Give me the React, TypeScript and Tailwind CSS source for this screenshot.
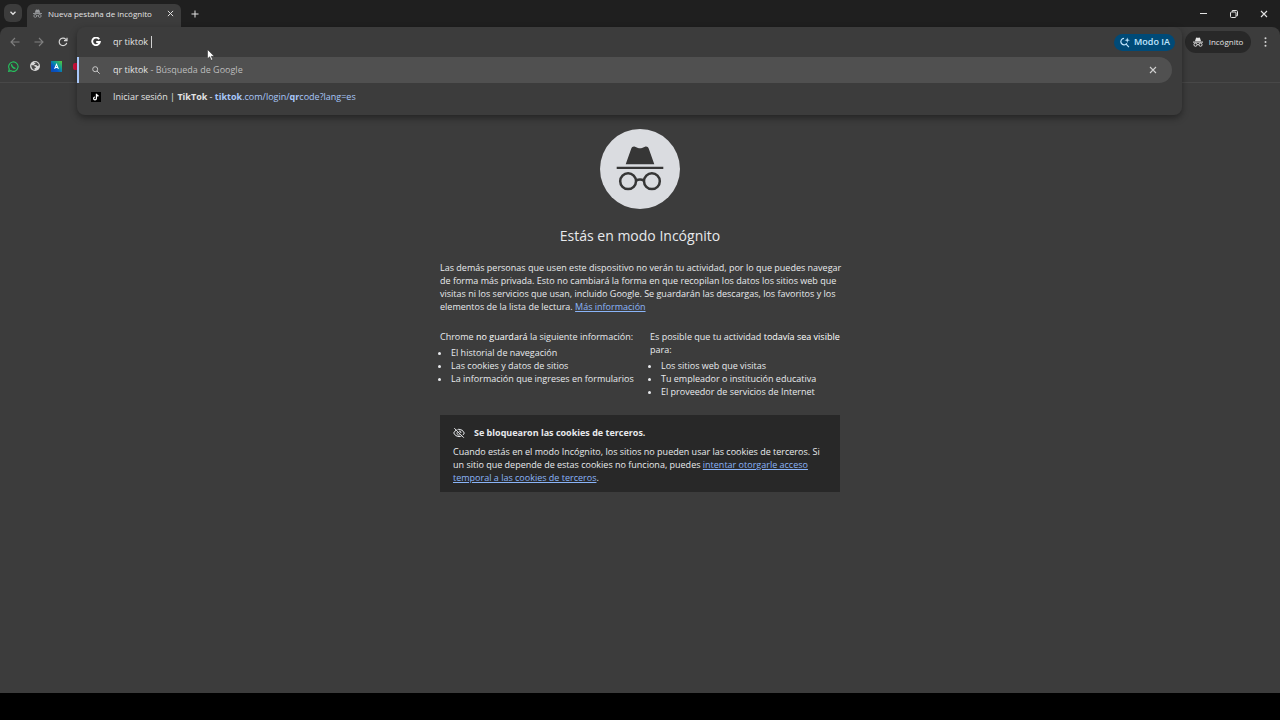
import type { ReactNode } from "react";

function IncognitoGlyph({ className }: { className: string }) {
  return (
    <svg viewBox="0 0 48 46" className={className} fill="none" aria-hidden="true">
      <path
        d="M9.3 19 14.4 4.2C15 2 17 1 19 1.8L22 3q2 .8 4 0l3-1.2C31 1 33 2 33.6 4.2L38.7 19Z"
        fill="currentColor"
      />
      <path d="M0 21h48v5H0z" fill="currentColor" />
      <circle cx="12" cy="36" r="7.5" stroke="currentColor" strokeWidth="4.5" />
      <circle cx="36" cy="36" r="7.5" stroke="currentColor" strokeWidth="4.5" />
      <path d="M20 35.5q4-2.5 8 0" stroke="currentColor" strokeWidth="4" />
    </svg>
  );
}

function HeroGlyph() {
  return (
    <svg viewBox="0 0 80 80" className="size-20" fill="none" aria-hidden="true">
      <circle cx="40" cy="40" r="40" fill="#dadce0" />
      <g fill="#363636">
        <path d="M25.7 35.3 31.2 19.8C31.9 17.9 33.3 17.2 35 17.8L38 18.9q2 .7 4 0l3-1.1c1.7-.6 3.1.1 3.8 2L54.3 35.3Z" />
        <path d="M16.7 37.8h46.6v2.3H16.7z" />
      </g>
      <g stroke="#363636" strokeWidth="2.5">
        <circle cx="28.1" cy="52.2" r="7.9" />
        <circle cx="51.9" cy="52.2" r="7.9" />
        <path d="M36 51.6q4-2.4 8 0" />
      </g>
    </svg>
  );
}

function Cross({ className }: { className: string }) {
  return (
    <svg viewBox="0 0 8 8" className={className} stroke="currentColor" strokeWidth="1.1" aria-hidden="true">
      <path d="m1 1 6 6M7 1 1 7" />
    </svg>
  );
}

function ArrowLeft({ className = "" }: { className?: string }) {
  return (
    <svg viewBox="0 0 10 10" className={`size-[10px] ${className}`} fill="none" stroke="currentColor" strokeWidth="1.1" aria-hidden="true">
      <path d="M9.5 5H1.2M5 1 1 5l4 4" />
    </svg>
  );
}

function Link({ children }: { children: ReactNode }) {
  return (
    <a href="#" className="text-[#8ab4f8] underline">
      {children}
    </a>
  );
}

function TabStrip() {
  return (
    <header className="flex h-[27px] shrink-0 items-stretch bg-[#1f1f1f]">
      <button aria-label="Buscar pestañas" className="mt-1 ml-1 flex size-[18px] items-center justify-center rounded-md bg-[#3c3c3c] text-[#e3e3e3]">
        <svg viewBox="0 0 8 8" className="size-2" fill="none" stroke="currentColor" strokeWidth="1.3" aria-hidden="true">
          <path d="m1.5 2.8 2.5 2.5 2.5-2.5" />
        </svg>
      </button>
      <div className="mt-1 ml-[5px] flex w-[154px] items-center rounded-t-md bg-[#3c3c3c] pr-[7px] pb-1 pl-1.5 text-[#e3e3e3]">
        <IncognitoGlyph className="size-[9px] shrink-0 text-[#9a9c9f]" />
        <span className="ml-1.5 flex-1 text-[8px] whitespace-nowrap">Nueva pestaña de incógnito</span>
        <button aria-label="Cerrar pestaña">
          <Cross className="size-[7px]" />
        </button>
      </div>
      <button aria-label="Nueva pestaña" className="ml-2.5 text-[#e3e3e3]">
        <svg viewBox="0 0 8 8" className="size-2" stroke="currentColor" aria-hidden="true">
          <path d="M4 .5v7M.5 4h7" />
        </svg>
      </button>
      <div className="ml-auto flex items-center gap-[22px] pr-3 text-[#e3e3e3]">
        <button aria-label="Minimizar">
          <svg viewBox="0 0 8 8" className="size-2" stroke="currentColor" aria-hidden="true">
            <path d="M0 3.5h7" />
          </svg>
        </button>
        <button aria-label="Restaurar">
          <svg viewBox="0 0 8 8" className="size-2" fill="none" stroke="currentColor" aria-hidden="true">
            <rect x=".5" y="2" width="5.5" height="5.5" rx="1" />
            <path d="M2.3 1.8V.5h4q1.2 0 1.2 1.2v4H6.3" />
          </svg>
        </button>
        <button aria-label="Cerrar">
          <Cross className="size-2" />
        </button>
      </div>
    </header>
  );
}

function Omnibox() {
  return (
    <div className="relative z-10 flex-1">
      <div className="absolute inset-x-0 top-0 rounded-lg bg-[#3c3c3c] pb-[5px] shadow-[0_3px_7px_rgba(0,0,0,0.4)]">
        <div className="flex h-[30px] items-center pr-[7px] pl-[14px]">
          <svg viewBox="0 0 10 10" className="size-[10px]" fill="none" stroke="#fff" strokeWidth="1.9" aria-hidden="true">
            <path d="M8.2 2.2A3.8 3.8 0 1 0 8.8 5H5.2" />
          </svg>
          <div className="ml-3 grid min-w-0 flex-1 items-center">
            <input
              aria-label="Barra de direcciones"
              defaultValue="qr tiktok"
              className="col-start-1 row-start-1 w-full bg-transparent text-[9px] leading-4 text-[#e3e3e3] outline-none"
            />
            <span className="col-start-1 row-start-1 ml-[38px] h-3 w-px bg-[#d0d0d0]" />
          </div>
          <button className="flex h-[17px] w-[61px] items-center justify-center gap-1 rounded-full bg-[#004a77] text-[9px] font-semibold whitespace-nowrap text-[#c2e7ff]">
            <svg viewBox="0 0 12 12" className="size-[11px]" fill="none" stroke="currentColor" strokeWidth="1.3" aria-hidden="true">
              <path d="M5.5 1.5a3.5 3.5 0 1 0 3 5.300M7.300 7.300l3.500 3.700" />
              <path d="M9 .5 9.7 2.8 12 3.5 9.7 4.2 9 6.5 8.3 4.2 6 3.5 8.3 2.8Z" fill="currentColor" stroke="none" />
            </svg>
            Modo IA
          </button>
        </div>
        <ul className="text-[9px] text-[#e3e3e3]">
          <li className="mr-[10px] flex h-[26px] items-center rounded-r-full border-l-2 border-[#a8c7fa] bg-[#505050] pr-[15px] pl-[13px]">
            <svg viewBox="0 0 8 8" className="mr-[13px] size-2" fill="none" stroke="#c7c7c7" aria-hidden="true">
              <circle cx="3.2" cy="3.2" r="2.5" />
              <path d="m5 5 2.7 2.7" />
            </svg>
            <span className="flex-1">
              qr tiktok <span className="text-[#bdbdbd]">- Búsqueda de Google</span>
            </span>
            <button aria-label="Quitar sugerencia" className="text-[#d0d0d0]">
              <Cross className="size-2" />
            </button>
          </li>
          <li className="flex h-[27px] items-center pl-[14px]">
            <span className="mr-3 flex size-[10px] items-center justify-center bg-black">
              <svg viewBox="0 0 10 10" className="size-[10px]" fill="none" aria-hidden="true">
                <path d="M5.4 1.8v4.6A1.4 1.4 0 1 1 4 5M5.4 2q.4 1.7 2.2 1.8" stroke="#fff" strokeWidth="1.2" />
              </svg>
            </span>
            <span>
              Iniciar sesión | <b>TikTok</b> -{" "}
              <span className="text-[#a8c7fa]">
                <b>tiktok</b>.com/login/<b>qr</b>code?lang=es
              </span>
            </span>
          </li>
        </ul>
      </div>
    </div>
  );
}

function Toolbar() {
  return (
    <div className="flex h-[30px] shrink-0 rounded-t-lg bg-[#3c3c3c]">
      <div className="flex w-[77px] items-center gap-[14px] pl-[10px] text-[#808080]">
        <button aria-label="Atrás">
          <ArrowLeft />
        </button>
        <button aria-label="Adelante">
          <ArrowLeft className="rotate-180" />
        </button>
        <button aria-label="Volver a cargar" className="text-[#d6d6d6]">
          <svg viewBox="0 0 10 10" className="size-[10px]" fill="none" stroke="currentColor" strokeWidth="1.2" aria-hidden="true">
            <path d="M8.7 5.8A3.8 3.8 0 1 1 7.8 2.3L8.6 3.2" />
            <path d="M9 .7v3H6" />
          </svg>
        </button>
      </div>
      <Omnibox />
      <div className="flex items-center pl-[3px]">
        <button className="flex h-[22px] w-[66px] items-center justify-center gap-1.5 rounded-full bg-[#282828] text-[8px] text-[#e3e3e3]">
          <IncognitoGlyph className="size-[10px]" />
          Incógnito
        </button>
        <button aria-label="Menú" className="px-[13px] text-[#d6d6d6]">
          <svg viewBox="0 0 3 10" className="h-[10px] w-[3px]" fill="currentColor" aria-hidden="true">
            <circle cx="1.5" cy="1.2" r="1" />
            <circle cx="1.5" cy="5" r="1" />
            <circle cx="1.5" cy="8.8" r="1" />
          </svg>
        </button>
      </div>
    </div>
  );
}

function BookmarkBar() {
  return (
    <nav aria-label="Marcadores" className="flex h-[26px] shrink-0 items-start gap-[11px] border-b border-[#484848] bg-[#3c3c3c] pt-1 pl-2">
      <a href="#" aria-label="WhatsApp">
        <svg viewBox="0 0 11 11" className="size-[11px]" fill="none" stroke="#25c35e" aria-hidden="true">
          <path d="M.7 10.4 1.3 8A4.7 4.7 0 1 1 3 9.7Z" strokeWidth="1.1" />
          <path d="M3.9 3.2q-.8.8.5 2.5T7.5 7.4" strokeWidth="1.4" />
        </svg>
      </a>
      <a href="#" aria-label="Sitio web">
        <svg viewBox="0 0 10 10" className="size-[10px]" aria-hidden="true">
          <circle cx="5" cy="5" r="5" fill="#d6d6d6" />
          <path d="M1.2 4.3h2.3q1.2 0 1.3 1.4h1v1.4H4.6v1.8Q1.6 8.5 1.2 4.3ZM4.3 1.2h2.3q1.8.8 2.3 2.9-.6 1.2-1.7.9-.4-.9-1.4-.9H4.3V2.9h1V1.9h-1Z" fill="#4a4a4a" />
        </svg>
      </a>
      <a href="#" aria-label="Aplicación">
        <svg viewBox="0 0 11 11" className="size-[11px]" aria-hidden="true">
          <defs>
            <linearGradient id="tile" x1="1" y1="0" x2="0" y2="1">
              <stop offset="0" stopColor="#58c936" />
              <stop offset=".4" stopColor="#0b9a9a" />
              <stop offset=".65" stopColor="#0756c8" />
              <stop offset="1" stopColor="#0a49b0" />
            </linearGradient>
          </defs>
          <path d="M0 0h11v11H0z" fill="url(#tile)" />
          <path d="M3.6 7.9 5.5 3.4l1.9 4.5M4.3 6.5h2.4" fill="none" stroke="#fff" strokeWidth="1.1" />
        </svg>
      </a>
      <a href="#" aria-label="Favorito">
        <svg viewBox="0 0 10 10" className="size-[10px]" aria-hidden="true">
          <rect y="2" width="10" height="7" rx="2" fill="#d9103f" />
        </svg>
      </a>
    </nav>
  );
}

function Bullets({ items }: { items: string[] }) {
  return (
    <ul className="mt-[3px] list-disc pl-[11px]">
      {items.map((item) => (
        <li key={item}>{item}</li>
      ))}
    </ul>
  );
}

function NewTabPage() {
  return (
    <main className="flex flex-1 flex-col items-center bg-[#3c3c3c] pt-[46px] text-[9px] leading-[13px] whitespace-nowrap text-[#e8eaed]">
      <HeroGlyph />
      <div className="w-[400px]">
        <h1 className="mt-4 text-center text-[14px] leading-[22px]">Estás en modo Incógnito</h1>
        <p className="mt-[14px]">
          Las demás personas que usen este dispositivo no verán tu actividad, por lo que puedes navegar
          <br />
          de forma más privada. Esto no cambiará la forma en que recopilan los datos los sitios web que
          <br />
          visitas ni los servicios que usan, incluido Google. Se guardarán las descargas, los favoritos y los
          <br />
          elementos de la lista de lectura. <Link>Más información</Link>
        </p>
        <div className="mt-[17px] grid grid-cols-2 gap-5">
          <section>
            <p>
              Chrome <em className="text-white not-italic">no guardará</em> la siguiente información:
            </p>
            <Bullets
              items={[
                "El historial de navegación",
                "Las cookies y datos de sitios",
                "La información que ingreses en formularios",
              ]}
            />
          </section>
          <section>
            <p>
              Es posible que tu actividad <em className="text-white not-italic">todavía sea visible</em>
              <br />
              para:
            </p>
            <Bullets
              items={[
                "Los sitios web que visitas",
                "Tu empleador o institución educativa",
                "El proveedor de servicios de Internet",
              ]}
            />
          </section>
        </div>
        <section className="mt-[17px] bg-[#282828] px-[13px] pt-[11px] pb-2">
          <h2 className="flex items-center gap-[9px] font-bold">
            <svg viewBox="0 0 12 12" className="size-3" fill="none" stroke="currentColor" aria-hidden="true">
              <path d="M3.4 3Q1.6 4 .7 6q1.6 3.6 5.3 3.6 1.4 0 2.5-.6M4.6 2.5Q5.3 2.3 6 2.3 9.7 2.3 11.3 6q-.5 1.1-1.4 2M4.2 5.2A2 2 0 0 0 6.7 7.9M6 4a2 2 0 0 1 2 2M1.3 1.2l9.5 9.5" />
            </svg>
            Se bloquearon las cookies de terceros.
          </h2>
          <p className="mt-1.5">
            Cuando estás en el modo Incógnito, los sitios no pueden usar las cookies de terceros. Si
            <br />
            un sitio que depende de estas cookies no funciona, puedes <Link>intentar otorgarle acceso</Link>
            <br />
            <Link>temporal a las cookies de terceros</Link>.
          </p>
        </section>
      </div>
    </main>
  );
}

export default function App() {
  return (
    <div className="relative flex min-h-screen flex-col bg-[#1f1f1f] font-['Open_Sans','Noto_Sans',sans-serif]">
      <TabStrip />
      <Toolbar />
      <BookmarkBar />
      <NewTabPage />
      <footer className="h-[27px] shrink-0 bg-black" />
      <svg viewBox="0 0 8 12" className="pointer-events-none absolute top-[49px] left-[207px] z-20 h-3 w-2" aria-hidden="true">
        <path d="M.5.5v9.3l2.2-2 1.5 3.5 1.5-.7-1.5-3.3h3Z" fill="#fff" stroke="#222" strokeWidth=".5" />
      </svg>
    </div>
  );
}
